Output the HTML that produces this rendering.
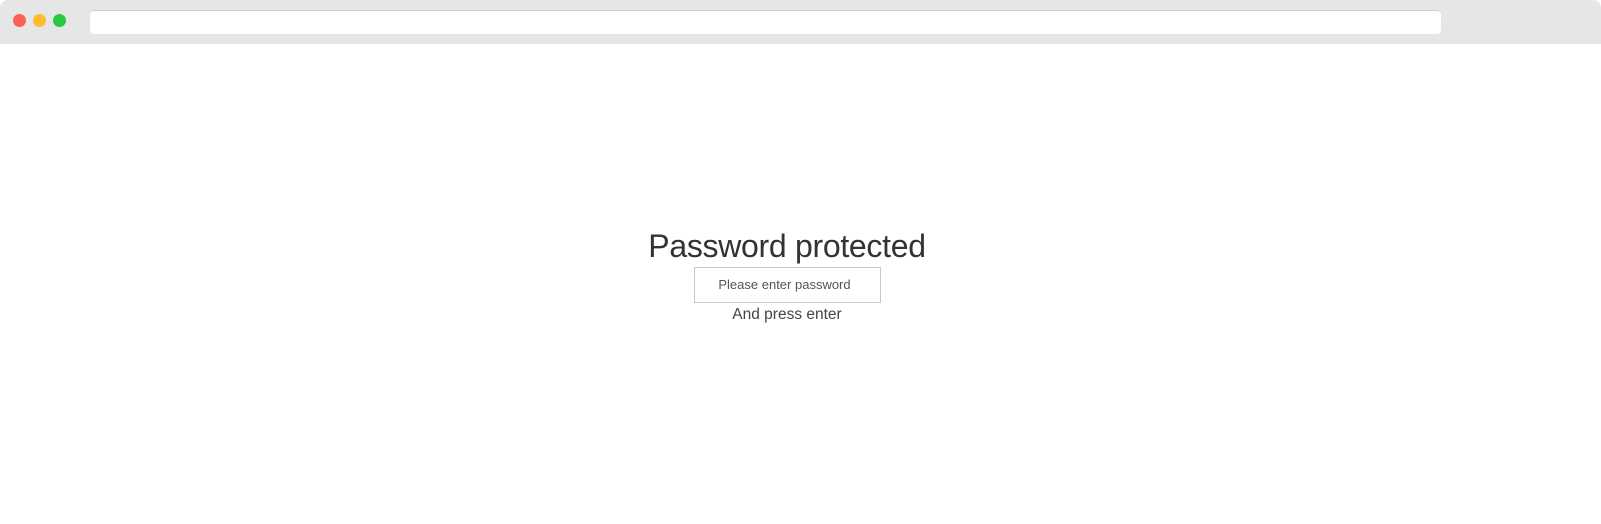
<!DOCTYPE html>
<html><head><style>
html,body{margin:0;padding:0;background:#fff;}
body{width:1601px;height:524px;position:relative;overflow:hidden;font-family:"Liberation Sans",sans-serif;}
.win{position:absolute;left:0;top:0;width:1601px;height:524px;border-radius:8px;overflow:hidden;background:#fff;}
.bar{position:absolute;left:0;top:0;width:1601px;height:44px;background:#e6e6e6;}
.dot{position:absolute;top:14px;width:13px;height:13px;border-radius:50%;}
.addr{position:absolute;left:90px;top:10px;width:1351px;height:24px;background:#fff;border-radius:4px;border-top:1px solid #cfcfcf;box-sizing:border-box;}
.t{position:absolute;left:0;width:1574px;text-align:center;}
h1{margin:0;font-weight:300;font-size:32px;letter-spacing:-0.3px;color:#333;top:229px;line-height:34px;}
.inp{position:absolute;left:694px;top:267px;width:187px;height:36px;box-sizing:border-box;border:1px solid #c8c8c8;font-size:13px;color:#555;text-align:center;line-height:34px;padding-right:6px;}
.sub{top:305px;font-size:15.5px;color:#444;line-height:20px;}
</style></head><body>
<div class="win">
<div class="bar">
<div class="dot" style="left:13px;background:#fe5f57;"></div>
<div class="dot" style="left:33px;background:#febc2e;"></div>
<div class="dot" style="left:53px;background:#28c840;"></div>
<div class="addr"></div>
</div>
<h1 class="t">Password protected</h1>
<div class="inp">Please enter password</div>
<div class="t sub">And press enter</div>
</div>
</body></html>
